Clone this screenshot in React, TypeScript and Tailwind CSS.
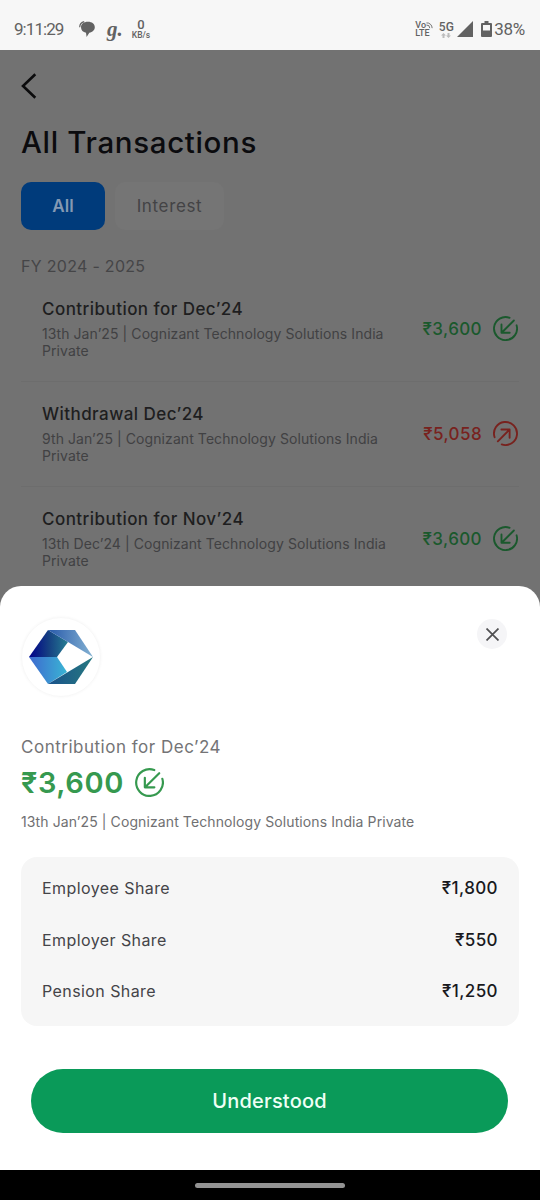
import type { ReactNode } from "react";

type Transaction = {
    title: string;
    details: string;
    amount: string;
    credit: boolean;
};

const transactions: Transaction[] = [
    {
        title: "Contribution for Dec’24",
        details: "13th Jan’25 | Cognizant Technology Solutions India Private",
        amount: "3,600",
        credit: true,
    },
    {
        title: "Withdrawal Dec’24",
        details: "9th Jan’25 | Cognizant Technology Solutions India Private",
        amount: "5,058",
        credit: false,
    },
    {
        title: "Contribution for Nov’24",
        details: "13th Dec’24 | Cognizant Technology Solutions India Private",
        amount: "3,600",
        credit: true,
    },
];

const shares = [
    { label: "Employee Share", value: "1,800" },
    { label: "Employer Share", value: "550" },
    { label: "Pension Share", value: "1,250" },
];

function ArrowIcon({ credit, className }: { credit: boolean; className: string }) {
    return (
        <svg viewBox="0 0 28 28" fill="none" stroke="currentColor" strokeWidth="2.1" className={className}>
            {credit ? (
                <>
                    <path d="M18.6 2A12.9 12.9 0 1 0 26.4 10.4" strokeLinecap="round" />
                    <path d="M23.4 5 10.2 18.2M9.5 9.5v9.2h9.2" strokeLinecap="round" strokeLinejoin="round" />
                </>
            ) : (
                <>
                    <path d="M1.8 18.2A12.9 12.9 0 1 1 9.8 26.2" strokeLinecap="round" />
                    <path d="M5.4 22.8 18.4 9.8M9.4 9.5h9.2v9.2" strokeLinecap="round" strokeLinejoin="round" />
                </>
            )}
        </svg>
    );
}

function StatusBar() {
    return (
        <header className="flex h-[50px] items-center justify-between bg-[#f7f7f7] pt-2 pr-[15px] pl-[14px] text-[#626262]">
            <div className="flex items-center">
                <span className="w-[65px] font-[Roboto] text-[17px] leading-5 tracking-[-0.95px]">9:11:29</span>
                <svg viewBox="0 0 16 16" className="h-4 w-4" fill="currentColor">
                    <path d="M9 .8C4.7.8 2 2.9 2 6.2c0 2.9 2 5 5 5.500L7.6 16l2.700-4.300c3.300-.5 5.500-2.600 5.500-5.400C15.8 3 13 .8 9 .8z" />
                    <path d="M.7 6.200C.8 3.200 2.5 1.200 5.200.6" stroke="currentColor" strokeWidth="1.2" fill="none" />
                </svg>
                <span className="ml-[12px] w-[17px] font-['Liberation_Serif'] text-[21px] leading-5 font-bold italic">g.</span>
                <div className="ml-[7px] flex w-5 flex-col items-center pt-px font-[Roboto] font-medium">
                    <span className="text-[13px] leading-[11px]">0</span>
                    <span className="pt-px text-[8.5px] leading-[9px]">KB/s</span>
                </div>
            </div>
            <div className="flex items-center font-[Roboto]">
                <div className="flex w-[19px] flex-col text-[9px] leading-[8px] font-medium">
                    <span className="flex items-center">
                        Vo
                        <svg viewBox="0 0 8 8" className="h-[7px] w-[7px]" fill="none" stroke="currentColor">
                            <path d="M.5 1A6 6 0 0 1 7 7M.5 3.500A3.500 3.500 0 0 1 4.300 7" />
                        </svg>
                    </span>
                    <span>LTE</span>
                </div>
                <div className="ml-[4px] flex w-4 flex-col items-center">
                    <span className="text-[12px] leading-[12px] font-medium">5G</span>
                    <svg viewBox="0 0 10 5" className="h-[5px] w-[10px]" fill="#bcbcbc">
                        <path d="M2.5 0 0 2.500h1.500V5h2V2.500H5zM7.500 5 5 2.500h1.500V0h2v2.500H10z" />
                    </svg>
                </div>
                <svg viewBox="0 0 16 16" className="ml-[3px] h-4 w-4" fill="currentColor">
                    <path d="M16 0v16H0z" />
                </svg>
                <svg viewBox="0 0 11 16" className="ml-[8px] h-4 w-[11px]">
                    <path d="M3.5 0h4v2H10a1 1 0 0 1 1 1v12a1 1 0 0 1-1 1H1a1 1 0 0 1-1-1V3a1 1 0 0 1 1-1h2.500z" fill="currentColor" />
                    <path d="M2 4h7v5.500H2z" fill="#f7f7f7" />
                </svg>
                <span className="ml-[2px] text-[17px] leading-5 tracking-[-0.3px]">38%</span>
            </div>
        </header>
    );
}

function Rupee({ children, className = "" }: { children: ReactNode; className?: string }) {
    return <span className={className}>₹{children}</span>;
}

function TransactionRow({ item }: { item: Transaction }) {
    return (
        <li className="flex h-[105px] items-start border-b border-[#6d6d6d] pt-[20px] pl-[21px]">
            <div className="w-[360px]">
                <h2 className="text-[17px] leading-6 font-medium tracking-[0.45px] text-[#1e1e20]">{item.title}</h2>
                <p className="mt-[4px] text-[14px] leading-[17px] tracking-[0.08px] text-[#414143]">{item.details}</p>
            </div>
            <div className={`ml-auto flex items-center pt-[19px] pr-px ${item.credit ? "text-[#1a592d]" : "text-[#78221e]"}`}>
                <Rupee className="pt-px text-[17px] leading-6 font-medium tracking-[0.4px]">{item.amount}</Rupee>
                <ArrowIcon credit={item.credit} className="ml-[11px] h-[25px] w-[25px]" />
            </div>
        </li>
    );
}

function CompanyLogo() {
    return (
        <div className="flex h-[80px] w-[80px] items-center justify-center rounded-full border border-[#f8f8f8] shadow-[0_0_3px_#f5f5f5]">
            <svg viewBox="0 0 64 54" className="h-[54px] w-[64px]">
                <defs>
                    <linearGradient id="navy" x1="0" x2="1">
                        <stop stopColor="#00008a" />
                        <stop offset=".5" stopColor="#153f82" />
                        <stop offset="1" stopColor="#267e93" />
                    </linearGradient>
                    <linearGradient id="sky" x1="0" x2="1">
                        <stop stopColor="#3d69cf" />
                        <stop offset="1" stopColor="#3ab5d4" />
                    </linearGradient>
                    <linearGradient id="top" x1="0" x2="1">
                        <stop stopColor="#2759aa" />
                        <stop offset="1" stopColor="#84b2d3" />
                    </linearGradient>
                    <linearGradient id="teal" x1="0" x2="1">
                        <stop stopColor="#19528b" />
                        <stop offset="1" stopColor="#267880" />
                    </linearGradient>
                </defs>
                <path d="M0 27 19 0l20 12-11 15z" fill="url(#navy)" />
                <path d="M0 27h28l10 15-19 12z" fill="url(#sky)" />
                <path d="M19 0h27l18 27-25-15z" fill="url(#top)" />
                <path d="m19 54 45-27-18 27z" fill="url(#teal)" />
            </svg>
        </div>
    );
}

function DetailsSheet() {
    return (
        <section className="absolute inset-x-0 top-[586px] h-[584px] rounded-t-[21px] bg-white px-[21px] pt-[31px]">
            <div className="flex items-start justify-between">
                <CompanyLogo />
                <button className="mt-[2px] mr-[12px] flex h-[30px] w-[30px] items-center justify-center rounded-full bg-[#f5f5f7] text-[#505052]">
                    <svg viewBox="0 0 12 12" className="h-[13px] w-[13px]" fill="none" stroke="currentColor" strokeWidth="1.6">
                        <path d="M.5.5l11 11M11.5.5l-11 11" />
                    </svg>
                </button>
            </div>

            <p className="mt-[38px] text-[17px] leading-6 tracking-[0.51px] text-[#747476]">Contribution for Dec’24</p>
            <div className="mt-1 flex items-center text-[#36994f]">
                <Rupee className="text-[29px] leading-10 font-semibold tracking-[0.6px]">3,600</Rupee>
                <ArrowIcon credit className="mb-[2px] ml-[11px] h-[29px] w-[29px]" />
            </div>
            <p className="mt-[10px] text-[14px] leading-[17px] tracking-[0.1px] text-[#707072]">
                13th Jan’25 | Cognizant Technology Solutions India Private
            </p>

            <div className="mt-[27px] flex h-[169px] flex-col justify-between rounded-[16px] bg-[#f6f6f6] px-[21px] pt-[19px] pb-[23px]">
                {shares.map((share) => (
                    <div key={share.label} className="flex items-center justify-between">
                        <span className="text-[16px] leading-6 tracking-[0.42px] text-[#444448]">{share.label}</span>
                        <Rupee className="text-[17px] leading-6 font-medium tracking-[0.4px] text-[#19191d]">{share.value}</Rupee>
                    </div>
                ))}
            </div>

            <button className="mx-[10px] mt-[43px] flex h-16 w-[477px] items-center justify-center rounded-full bg-[#0a9a59] text-[20px] font-medium tracking-[0.2px] text-[#effff6]">
                Understood
            </button>
        </section>
    );
}

export default function App() {
    return (
        <div className="relative flex h-[1200px] w-[540px] flex-col overflow-hidden bg-[#727272] font-[Inter,sans-serif]">
            <StatusBar />

            <main className="flex-1 px-[21px] pt-[23px]">
                <svg viewBox="0 0 16 26" className="h-[26px] w-4" fill="none" stroke="#0b0b0c" strokeWidth="2.6">
                    <path d="M14.3 1.3 2 13l12.3 11.7" />
                </svg>
                <h1 className="mt-[23px] text-[29.5px] leading-10 font-medium tracking-[0.65px] text-[#0b0b0e]">All Transactions</h1>

                <div className="mt-[20px] flex gap-[10px]">
                    <button className="h-12 w-[84px] rounded-[10px] bg-[#003b7b] pt-[2px] text-[17px] font-semibold text-[#8499b3]">All</button>
                    <button className="h-12 w-[109px] rounded-[10px] bg-[#757575] pt-[2px] text-[17px] tracking-[0.65px] text-[#434345]">Interest</button>
                </div>

                <p className="mt-[24px] text-[16px] leading-6 tracking-[0.3px] text-[#454547]">FY 2024 - 2025</p>
                <ul className="-mt-px">
                    {transactions.map((item) => (
                        <TransactionRow key={item.title} item={item} />
                    ))}
                </ul>
            </main>

            <DetailsSheet />

            <footer className="flex h-[30px] items-center justify-center bg-black">
                <div className="h-[5px] w-[150px] rounded-full bg-[#929292]" />
            </footer>
        </div>
    );
}
